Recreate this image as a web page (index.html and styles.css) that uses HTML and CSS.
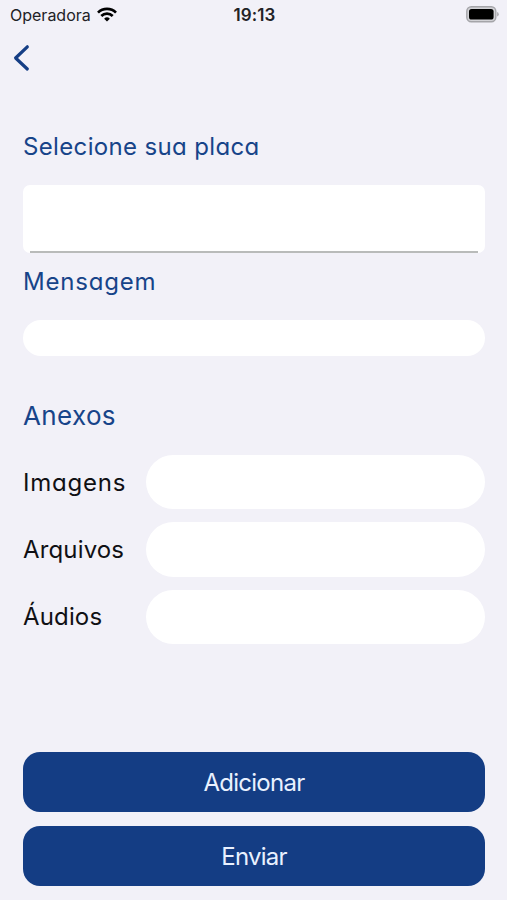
FILE: index.html
```
<!DOCTYPE html>
<html lang="pt-BR">
<head>
    <meta charset="UTF-8">
    <meta name="viewport" content="width=device-width, initial-scale=1.0">
    <title>Nova mensagem</title>
    <link rel="stylesheet" href="styles.css">
</head>
<body>
    <div class="screen">
        <div class="status-bar">
            <div class="carrier">
                <span>Operadora</span>
                <svg class="wifi" viewBox="0 0 20 15" fill="none" stroke="#000" stroke-width="2.7">
                    <path d="M1 5.6a12.8 12.8 0 0 1 18 0"/>
                    <path d="M4.3 9a8.1 8.1 0 0 1 11.4 0"/>
                    <path d="M10 14.6l-2.9-2.9a4.1 4.1 0 0 1 5.8 0z" fill="#000" stroke="none"/>
                </svg>
            </div>
            <div class="time">19:13</div>
            <svg class="battery" viewBox="0 0 33 17">
                <rect x="0.8" y="0.8" width="29" height="15" rx="4.5" fill="#d2d2d6" stroke="#a5a5a9" stroke-width="1.4"/>
                <rect x="3" y="3" width="24.6" height="10.6" rx="2.6" fill="#000"/>
                <path d="M31.2 6v4.6q1.5-.6 1.5-2.3t-1.5-2.3z" fill="#a5a5a9"/>
            </svg>
        </div>
        <div class="nav">
            <svg class="back" viewBox="0 0 18 28" fill="none" stroke="#153e85" stroke-width="3.2" stroke-linecap="round" stroke-linejoin="round">
                <path d="M15.3 2.8L3.6 14L15.3 25"/>
            </svg>
        </div>
        <form class="form">
            <label class="title" for="placa">Selecione sua placa</label>
            <div class="select">
                <input type="text" id="placa">
            </div>
            <label class="title message-title" for="mensagem">Mensagem</label>
            <input class="pill message" type="text" id="mensagem">
            <h2 class="title attachments">Anexos</h2>
            <div class="rows">
                <div class="row">
                    <label class="imagens" for="imagens">Imagens</label>
                    <input class="pill" type="text" id="imagens">
                </div>
                <div class="row">
                    <label class="arquivos" for="arquivos">Arquivos</label>
                    <input class="pill" type="text" id="arquivos">
                </div>
                <div class="row">
                    <label class="audios" for="audios">Áudios</label>
                    <input class="pill" type="text" id="audios">
                </div>
            </div>
            <div class="actions">
                <button class="btn" type="button">Adicionar</button>
                <button class="btn send" type="button">Enviar</button>
            </div>
        </form>
    </div>
</body>
</html>
```
FILE: styles.css
```
* {
    margin: 0;
    padding: 0;
    box-sizing: border-box;
}
body {
    background: #f2f1f8;
    font-family: 'Inter', sans-serif;
}
.screen {
    height: 900px;
    display: flex;
    flex-direction: column;
    overflow: hidden;
}
.status-bar {
    height: 29px;
    padding: 0 8px 0 10px;
    display: grid;
    grid-template-columns: 1fr auto 1fr;
    align-items: center;
    color: #222226;
    font-size: 16px;
}
.carrier {
    display: flex;
    align-items: center;
    gap: 6px;
}
.wifi {
    width: 20px;
    height: 15px;
}
.time {
    font-weight: 600;
    font-size: 17px;
    letter-spacing: 0.1px;
}
.battery {
    width: 33px;
    height: 17px;
    justify-self: end;
}
.nav {
    height: 57px;
    padding: 15px 12px;
}
.back {
    display: block;
    width: 18px;
    height: 28px;
}
.form {
    flex: 1;
    display: flex;
    flex-direction: column;
    padding: 44px 22px 14px 23px;
}
.title,
.row label {
    font-size: 24px;
    font-weight: 400;
    line-height: 34px;
    letter-spacing: 0.35px;
    font-feature-settings: 'cv11';
    white-space: nowrap;
}
.title {
    color: #174489;
}
input {
    border: none;
    outline: none;
    background: #fff;
    font: inherit;
}
.select {
    height: 68px;
    margin-top: 21px;
    padding: 0 7px;
    background: #fff;
    border-radius: 7px;
}
.select input {
    width: 100%;
    height: 68px;
    border-bottom: 2px solid #b9bbba;
}
.message-title {
    margin-top: 12px;
    letter-spacing: 0.8px;
}
.pill {
    border-radius: 28px;
    padding: 0 20px;
}
.message {
    height: 36px;
    margin-top: 21px;
}
.attachments {
    margin-top: 43px;
    font-size: 26px;
}
.rows {
    display: grid;
    gap: 13px;
    margin-top: 22px;
}
.row {
    display: grid;
    grid-template-columns: 123px 1fr;
    align-items: center;
}
.row label {
    padding-top: 1px;
    color: #101014;
}
.row .imagens {
    letter-spacing: 0.8px;
}
.row .arquivos,
.row .audios {
    letter-spacing: 0.15px;
}
.row .pill {
    width: 100%;
    height: 54.4px;
}
.actions {
    display: grid;
    gap: 14px;
    margin-top: auto;
}
.btn {
    height: 60px;
    border: none;
    border-radius: 17px;
    background: #143d84;
    color: #e9f1ff;
    font-family: 'Inter', sans-serif;
    font-size: 24px;
    letter-spacing: -0.75px;
}
```
